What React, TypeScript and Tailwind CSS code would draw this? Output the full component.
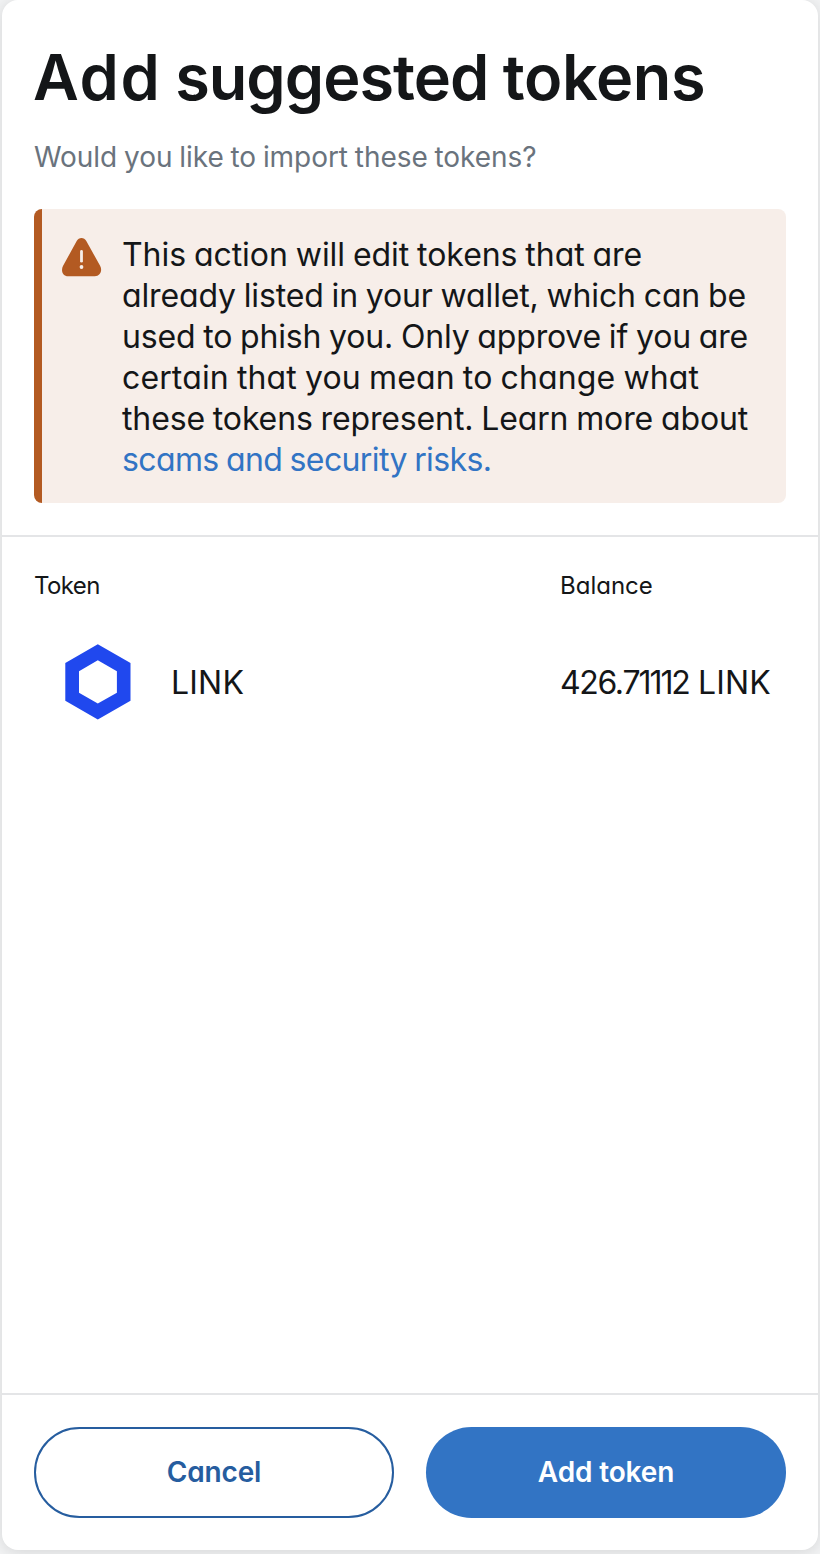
const warningLines = [
  { text: 'This action will edit tokens that are', spacing: 'tracking-[-0.055px]' },
  { text: 'already listed in your wallet, which can be', spacing: 'tracking-[-0.14px]' },
  { text: 'used to phish you. Only approve if you are', spacing: 'tracking-[-0.17px]' },
  { text: 'certain that you mean to change what', spacing: 'tracking-[0.13px]' },
  { text: 'these tokens represent. Learn more about', spacing: 'tracking-[-0.13px]' },
];

function WarningIcon() {
  return (
    <svg className="h-10 w-10 shrink-0" viewBox="0 0 40 40" fill="none">
      <path d="M14.7 4C16.8 0 22.2 0 24.3 4L38.1 28.8C40.7 33.6 38.2 39.2 32.8 39.2H6.2C0.8 39.2 -1.5 33.6 1.1 28.8Z" fill="#b35a22" />
      <path d="M19.5 14.5V24.2" stroke="#f7eee9" strokeWidth="2.8" strokeLinecap="round" />
      <circle cx="19.5" cy="30" r="1.9" fill="#f7eee9" />
    </svg>
  );
}

function LinkLogo() {
  return (
    <svg className="h-[76px] w-[66px] shrink-0" viewBox="0 0 66 76">
      <path fillRule="evenodd" d="M32.8 0.3L65.5 19V56.7L32.8 75.5L0.3 56.7V19ZM32.8 16.3L14 27.2V48.8L32.8 59.6L51.9 48.8V27.2Z" fill="#2048ee" />
    </svg>
  );
}

export default function App() {
  return (
    <div className="h-[1554px] w-[820px] bg-[#f2f3f4] px-0.5 pb-1 text-[#141618] [font-family:Inter,'Liberation_Sans',sans-serif] [font-feature-settings:'cv11']">
      <main className="flex h-[1550px] flex-col rounded-2xl bg-white shadow-[0_2px_16px_rgba(0,0,0,0.12)]">
        <header className="h-[537px] border-b-2 border-[#e4e5e7] px-8 pt-[37px]">
          <h1 className="-ml-px text-[63px] leading-[80px] font-semibold whitespace-nowrap [word-spacing:-1px]">
            <span className="tracking-[1.6px]">Add</span>
            <span className="tracking-[-1px]"> suggested</span>
            <span className="tracking-[-0.4px]"> tokens</span>
          </h1>
          <p className="mt-5 text-[28px] leading-10 tracking-[-0.05px] whitespace-nowrap text-[#6a737d] [word-spacing:-1px]">Would you like to import these tokens?</p>
          <section className="mt-8 flex h-[294px] rounded-lg border-l-8 border-[#b35a22] bg-[#f7eee9] pt-[25px] pl-5">
            <div className="pt-[3px]"><WarningIcon /></div>
            <p className="ml-5 text-[32px] leading-[41px] whitespace-nowrap [word-spacing:-1px]">
              {warningLines.map(({ text, spacing }) => (
                <span key={text} className={`block ${spacing}`}>{text}</span>
              ))}
              <a className="block tracking-[-0.62px] text-[#3274c4]">scams and security risks.</a>
            </p>
          </section>
        </header>
        <section className="grow px-8 pt-[33px]">
          <div className="flex text-[24px] leading-8">
            <div className="w-[526px] tracking-[-0.6px]">Token</div>
            <div>Balance</div>
          </div>
          <div className="mt-[42px] flex h-[76px] items-center text-[32px] whitespace-nowrap">
            <div className="flex w-[526px] items-center gap-10 pl-[31px]">
              <LinkLogo />
              <span className="pt-0.5 tracking-[0.2px]">LINK</span>
            </div>
            <div className="pt-0.5">
              <span className="tracking-[-1.4px]">426.</span>
              <span className="tracking-[-2.1px]">71112</span>
              <span className="tracking-[0.2px]"> LINK</span>
            </div>
          </div>
        </section>
        <footer className="flex h-[157px] gap-8 border-t-2 border-[#e4e5e7] px-8 pt-8 text-[28px] font-semibold tracking-[-0.15px]">
          <button className="h-[91px] w-[360px] rounded-full border-2 border-[#265d9f] pb-0.5 text-[#265d9f]">Cancel</button>
          <button className="h-[91px] w-[360px] rounded-full bg-[#3274c4] pb-0.5 text-white">Add token</button>
        </footer>
      </main>
    </div>
  );
}
